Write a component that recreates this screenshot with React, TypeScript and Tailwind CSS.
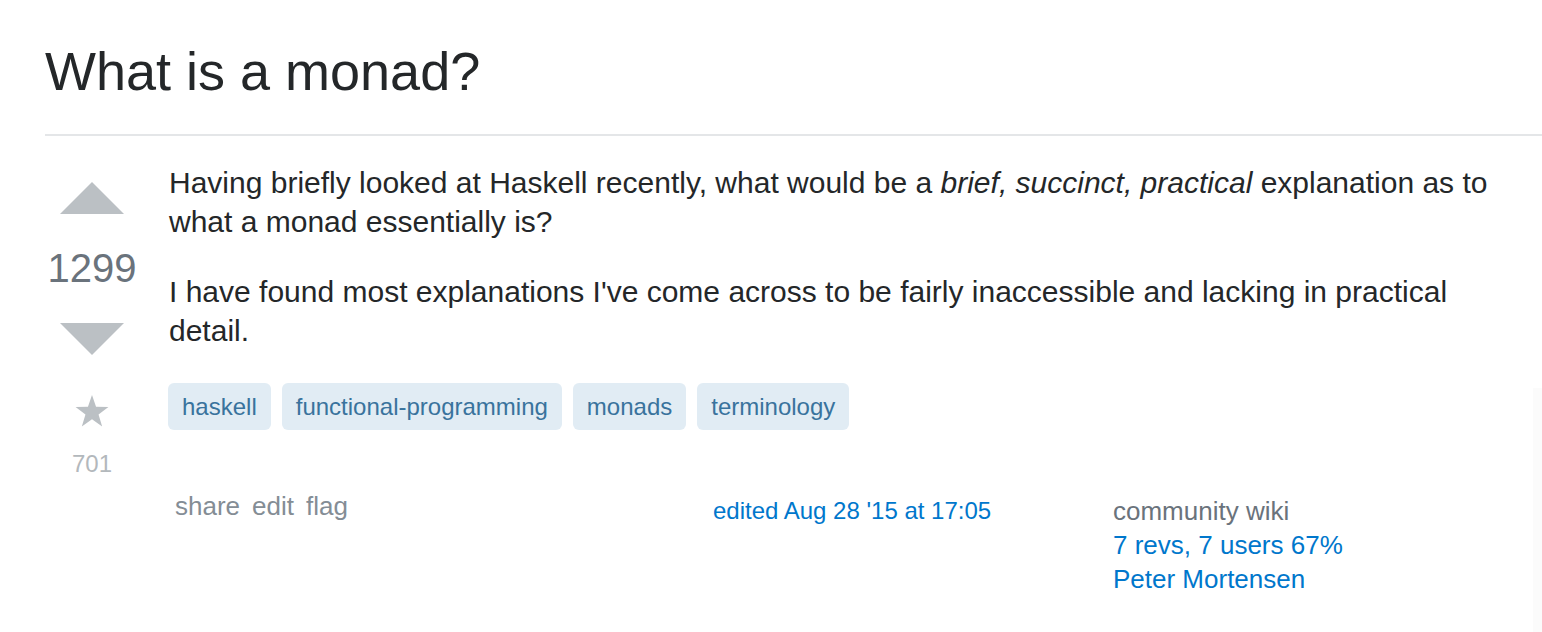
import React from "react";

const tags = ["haskell", "functional-programming", "monads", "terminology"];

export default function App() {
  return (
    <div className="relative w-[1542px] h-[632px] overflow-hidden bg-white font-['Liberation_Sans',Arial,sans-serif]">
      <div className="pl-[45px] pt-[35px]">
        <h1 className="text-[54px] leading-[73px] text-[#242729] font-normal">What is a monad?</h1>
        <div className="mt-[26px] h-[2px] bg-[#e4e6e8]" />
        <div className="flex mt-[27px]">
          <div className="w-[94px] shrink-0 flex flex-col items-center pt-[19px]">
            <svg width="64" height="32" viewBox="0 0 64 32">
              <polygon points="0,32 32,0 64,32" fill="#bbc0c4" />
            </svg>
            <div className="mt-[34px] text-[40px] leading-[40px] text-[#6a737c]">1299</div>
            <svg className="mt-[35px]" width="64" height="32" viewBox="0 0 64 32">
              <polygon points="0,0 64,0 32,32" fill="#bbc0c4" />
            </svg>
            <svg className="mt-[40px]" width="34" height="32" viewBox="0 0 24 23">
              <polygon
                points="12,0 14.9,8.4 23.8,8.6 16.7,14 19.3,22.6 12,17.5 4.7,22.6 7.3,14 0.2,8.6 9.1,8.4"
                fill="#bbc0c4"
              />
            </svg>
            <div className="mt-[25px] text-[24px] leading-[24px] text-[#b3b8bc]">701</div>
          </div>
          <div className="w-[1344px] shrink-0 ml-[30px] text-[#242729]">
            <p className="text-[30px] leading-[39px] mb-[31px]">
              Having briefly looked at Haskell recently, what would be a{" "}
              <em>brief, succinct, practical</em> explanation as to what a monad essentially is?
            </p>
            <p className="text-[30px] leading-[39px]">
              I have found most explanations I've come across to be fairly inaccessible and lacking in practical detail.
            </p>
            <div className="mt-[33px] -ml-px flex gap-[11px]">
              {tags.map((t) => (
                <span
                  key={t}
                  className="px-[14px] h-[47px] flex items-center rounded-[6px] bg-[#e1ecf4] text-[#39739d] text-[24px]"
                >
                  {t}
                </span>
              ))}
            </div>
            <div className="mt-[59px] flex items-start">
              <div className="w-[544px] shrink-0 flex gap-[12px] pl-[6px] text-[26px] leading-[34px] text-[#848d95]">
                <span>share</span>
                <span>edit</span>
                <span>flag</span>
              </div>
              <div className="w-[400px] shrink-0 pt-[5px] text-[24px] leading-[34px] text-[#0077cc]">
                edited Aug 28 '15 at 17:05
              </div>
              <div className="w-[400px] shrink-0 pt-[5px] text-[26px] leading-[34px]">
                <div className="text-[#6a737c]">community wiki</div>
                <div className="text-[#0077cc]">7 revs, 7 users 67%</div>
                <div className="text-[#0077cc]">Peter Mortensen</div>
              </div>
            </div>
          </div>
          <div className="shrink-0 ml-[20px] mt-[225px] w-[300px] h-[400px] bg-[#fbfbfb]" />
        </div>
      </div>
    </div>
  );
}
